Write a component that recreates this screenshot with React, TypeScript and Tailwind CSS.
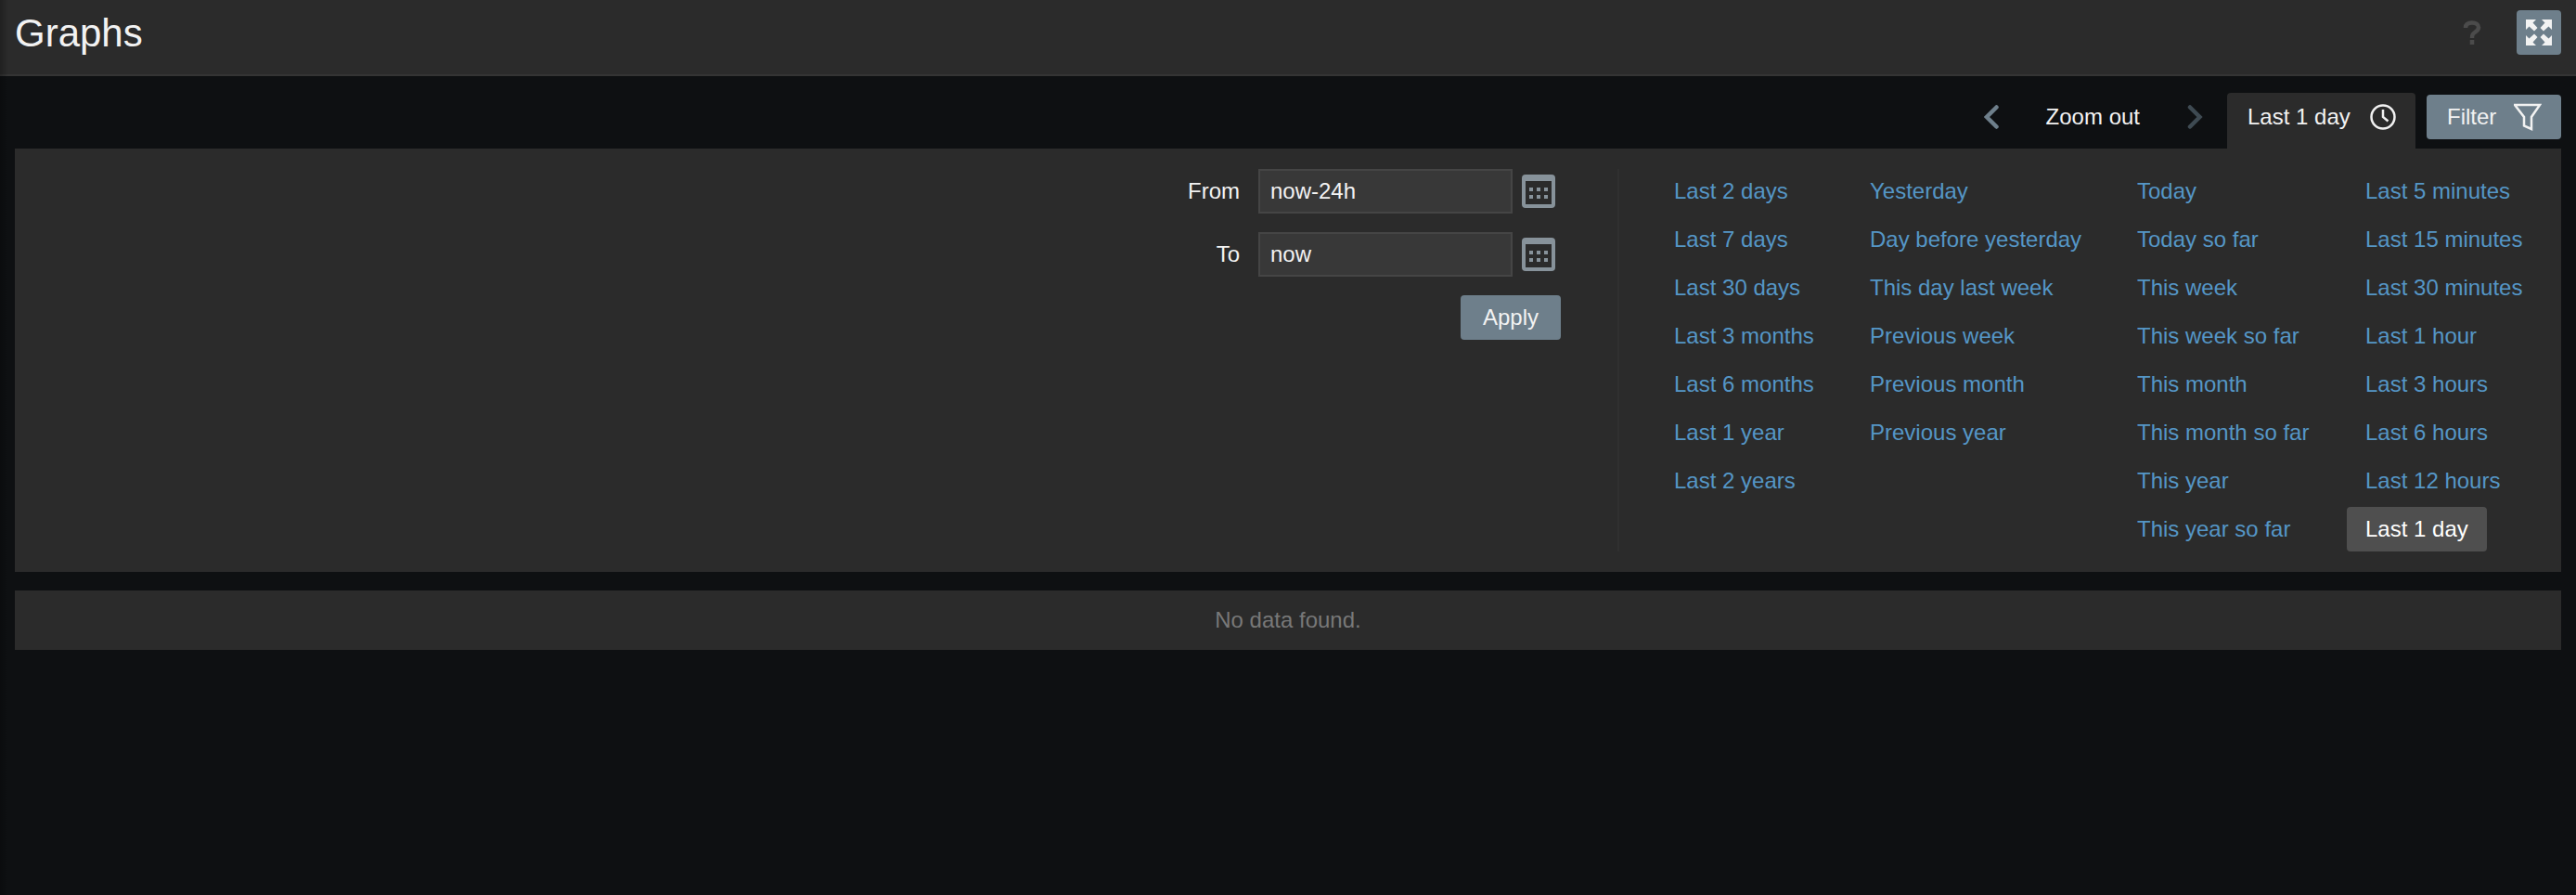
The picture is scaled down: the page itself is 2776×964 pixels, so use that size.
const PRESETS = [
  { width: 'w-[211px]', items: ['Last 2 days', 'Last 7 days', 'Last 30 days', 'Last 3 months', 'Last 6 months', 'Last 1 year', 'Last 2 years'] },
  { width: 'w-[288px]', items: ['Yesterday', 'Day before yesterday', 'This day last week', 'Previous week', 'Previous month', 'Previous year'] },
  { width: 'w-[246px]', items: ['Today', 'Today so far', 'This week', 'This week so far', 'This month', 'This month so far', 'This year', 'This year so far'] },
  { width: 'w-[231px]', items: ['Last 5 minutes', 'Last 15 minutes', 'Last 30 minutes', 'Last 1 hour', 'Last 3 hours', 'Last 6 hours', 'Last 12 hours', 'Last 1 day'] },
];

const CalendarIcon = () => (
  <svg width="36" height="36" viewBox="0 0 36 36" className="shrink-0">
    <rect width="36" height="36" rx="4" fill="#87929a" />
    <rect x="4" y="7" width="28" height="25" fill="#2b2b2b" />
    <g fill="#87929a">
      <rect x="8" y="14" width="4" height="4" />
      <rect x="16" y="14" width="4" height="4" />
      <rect x="24" y="14" width="4" height="4" />
      <rect x="8" y="22" width="4" height="4" />
      <rect x="16" y="22" width="4" height="4" />
      <rect x="24" y="22" width="4" height="4" />
    </g>
  </svg>
);

const DateRow = ({ label, value }: { label: string; value: string }) => (
  <div className="flex items-center">
    <span className="mr-5 text-[24px] text-[#f2f2f2]">{label}</span>
    <div className="flex h-12 w-[274px] items-center border-2 border-[#454545] bg-[#383838] px-[11px] text-[24px] text-[#f2f2f2]">
      {value}
    </div>
    <div className="ml-2.5">
      <CalendarIcon />
    </div>
  </div>
);

export default function App() {
  return (
    <div className="relative min-h-[964px] bg-[#0e1012] font-['Liberation_Sans',Arial,sans-serif]">
      {/* sidebar shadow along the left edge */}
      <div className="pointer-events-none absolute inset-y-0 left-0 w-[9px] bg-gradient-to-r from-black/25 to-transparent" />

      <header className="flex h-[82px] items-start justify-between border-b-2 border-[#343434] bg-[#2b2b2b] px-4 pt-[11px]">
        <h1 className="mt-0.5 text-[42px] leading-[46px] font-normal text-[#f2f2f2]">Graphs</h1>
        <div className="flex items-center">
          <svg width="20" height="26" viewBox="0 0 20 26" fill="none" className="mr-[38px]">
            <path d="M3 8C3 4 6 2.500 10 2.500S17 4.500 17 7.500C17 10 15.500 11 13.500 12.500 11 14.300 10 15 10 19" stroke="#4b4b4b" strokeWidth="4.500" />
            <rect x="7.750" y="21" width="4.500" height="5" fill="#4b4b4b" />
          </svg>
          <button className="flex h-12 w-12 items-center justify-center rounded-[4px] bg-[#6e7f8b]">
            <svg width="28" height="28" viewBox="0 0 28 28" fill="#f2f2f2">
              <path d="M0 0h11L7.500 3.500l5 5.500L9 12.500l-5.500-5L0 11z" />
              <path d="M28 0H17l3.500 3.500-5 5.500 3.500 3.500 5.500-5L28 11z" />
              <path d="M0 28h11l-3.500-3.500 5-5.500L9 15.500l-5.500 5L0 17z" />
              <path d="M28 28H17l3.500-3.500-5-5.500 3.500-3.500 5.500 5L28 17z" />
            </svg>
          </button>
        </div>
      </header>

      <main className="px-4">
        <nav className="flex h-[78px] items-end justify-end">
          <div className="flex h-[60px] items-center text-[24px] text-[#f2f2f2]">
            <svg width="16" height="26" viewBox="0 0 16 26" fill="none" stroke="#6e7f8b" strokeWidth="4.500" strokeLinecap="round" className="mb-2">
              <path d="M13.500 2.500 3 13l10.500 10.500" />
            </svg>
            <span className="mx-[51px] mb-2">Zoom out</span>
            <svg width="17" height="26" viewBox="0 0 17 26" fill="none" stroke="#3e4a52" strokeWidth="4.500" strokeLinecap="round" className="mb-2">
              <path d="M3 2.500 13.500 13 3 23.500" />
            </svg>
            <div className="ml-[26px] flex h-[60px] w-[203px] items-center rounded-t-[4px] bg-[#2b2b2b] pb-2 pl-[22px]">
              <span>Last 1 day</span>
              <svg width="30" height="30" viewBox="0 0 30 30" fill="none" stroke="#f2f2f2" strokeWidth="2.500" className="ml-5">
                <circle cx="15" cy="15" r="12.500" />
                <path d="M15 7v8l5.500 4.500" />
              </svg>
            </div>
            <div className="mb-2 ml-3 flex h-12 w-[145px] items-center rounded-[4px] bg-[#6e7f8b] pl-[22px]">
              <span>Filter</span>
              <svg width="30" height="30" viewBox="0 0 30 30" fill="none" stroke="#f2f2f2" strokeWidth="2.500" className="ml-[19px]">
                <path d="M1 2h27L19 15v13l-8-3.500V15z" />
              </svg>
            </div>
          </div>
        </nav>

        <section className="flex h-[456px] bg-[#2b2b2b] py-[22px]">
          <div className="flex w-[1727px] flex-col items-end pr-[61px]">
            <div className="flex flex-col items-end gap-5 pr-1.5">
              <DateRow label="From" value="now-24h" />
              <DateRow label="To" value="now" />
            </div>
            <button className="mt-5 h-12 w-[108px] rounded-[4px] bg-[#6e7f8b] text-[24px] text-[#f2f2f2]">Apply</button>
          </div>
          <div className="flex border-l-2 border-[#303030] pl-[39px]">
            {PRESETS.map((column) => (
              <ul key={column.items[0]} className={column.width}>
                {column.items.map((item) =>
                  item === 'Last 1 day' ? (
                    <li key={item} className="flex h-[52px] items-start">
                      <span className="flex h-12 items-center rounded-[4px] bg-[#4f4f4f] px-5 text-[24px] text-white">{item}</span>
                    </li>
                  ) : (
                    <li key={item} className="flex h-[52px] items-start">
                      <span className="flex h-12 items-center px-5 text-[24px] text-[#5596c6]">{item}</span>
                    </li>
                  ),
                )}
              </ul>
            ))}
          </div>
        </section>

        <div className="mt-5 flex h-16 items-center justify-center bg-[#2b2b2b] text-[24px] text-[#787878]">No data found.</div>
      </main>
    </div>
  );
}
